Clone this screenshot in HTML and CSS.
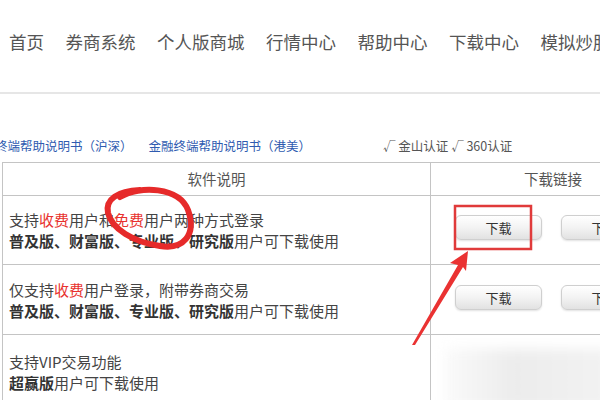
FILE: index.html
```html
<!DOCTYPE html>
<html lang="zh-CN">
<head>
  <meta charset="UTF-8" />
  <meta name="viewport" content="width=device-width, initial-scale=1.0"/>
  <title>下载中心</title>
  <link rel="stylesheet" href="styles.css">
</head>
<body>

  <div class="nav">
    <a href="#">首页</a>
    <a href="#">券商系统</a>
    <a href="#">个人版商城</a>
    <a href="#">行情中心</a>
    <a href="#">帮助中心</a>
    <a href="#">下载中心</a>
    <a href="#">模拟炒股</a>
  </div>

  <div class="links">
    <a href="#">金融终端帮助说明书（沪深）</a>
    <a href="#">金融终端帮助说明书（港美）</a>
    <span class="cert">√ 金山认证 √ 360认证</span>
  </div>

  <table class="soft">
    <tr>
      <th class="desc">软件说明</th>
      <th class="dl">下载链接</th>
    </tr>
    <tr class="r1">
      <td class="desc">
        支持<span class="red">收费</span>用户和<span class="red">免费</span>用户两种方式登录<br>
        <b>普及版、财富版、专业版、研究版</b>用户可下载使用
      </td>
      <td class="dl">
        <div class="btns"><button>下载</button><button>下载</button></div>
      </td>
    </tr>
    <tr class="r2">
      <td class="desc">
        仅支持<span class="red">收费</span>用户登录，附带券商交易<br>
        <b>普及版、财富版、专业版、研究版</b>用户可下载使用
      </td>
      <td class="dl">
        <div class="btns"><button>下载</button><button>下载</button></div>
      </td>
    </tr>
    <tr class="r3">
      <td class="desc">
        支持VIP交易功能<br>
        <b>超赢版</b>用户可下载使用
      </td>
      <td class="dl">
        <div class="blur"></div>
      </td>
    </tr>
  </table>

  <!-- 标注：圈、框、箭头 -->
  <svg class="marks" width="600" height="400" viewBox="0 0 600 400">
    <path d="M120 197 C140 185, 179 187, 188 210 C197 235, 183 250, 160 246 C133 242, 112 229, 108 213 C105 199, 118 191, 140 190"
          fill="none" stroke="#e62a2a" stroke-width="6" stroke-linecap="round"/>
    <rect x="455" y="206" width="76" height="43" fill="none" stroke="#e03a3a" stroke-width="2.5"/>
    <polygon points="468,251 450,263 458,265 412,345 415,345 463,267 466,271" fill="#ea3232"/>
  </svg>

</body>
</html>
```

FILE: styles.css
```css
html, body {
  height: 400px;
}

body {
  margin: 0;
  position: relative;
  overflow: hidden;
  background: #fff;
  font-family: "Noto Sans CJK SC", "Noto Sans", sans-serif;
  color: #444;
}

.nav {
  display: flex;
  align-items: center;
  gap: 21.5px;
  height: 83px;
  padding: 0 0 9px 9px;
  border-bottom: 2px solid #e6e6e6;
  white-space: nowrap;
}

.nav a {
  font-size: 17.5px;
  color: #555;
  text-decoration: none;
}

.links {
  display: flex;
  align-items: flex-end;
  height: 60px;
  padding-bottom: 8px;
  margin-left: -30px;
  font-size: 12.5px;
  line-height: 17px;
  white-space: nowrap;
}

.links a {
  color: #2f5bb0;
  text-decoration: none;
  margin-right: 16px;
}

.links .cert {
  margin-left: 56px;
  color: #555;
}

table.soft {
  margin-left: 2px;
  width: 674px;
  border-collapse: collapse;
  table-layout: fixed;
  font-size: 15px;
}

.soft th,
.soft td {
  border: 1px solid #c4c4c4;
  padding: 0;
}

.soft th {
  height: 32px;
  font-weight: normal;
  font-size: 14.5px;
  line-height: 20px;
  color: #555;
}

.soft th.desc {
  width: 427px;
}

.soft td.desc {
  padding-left: 6px;
  line-height: 21px;
  color: #444;
}

.soft td.desc b {
  color: #333;
}

.red {
  color: #e8322e;
}

.r1 td {
  height: 68px;
}

.r2 td {
  height: 69px;
}

.r3 td {
  height: 74px;
}

.soft td.dl {
  padding-left: 24px;
}

.btns {
  display: flex;
  gap: 19px;
  margin-bottom: 5px;
}

.btns button {
  width: 87px;
  height: 25px;
  padding: 0;
  border: 1px solid #cfcfcf;
  border-radius: 6px;
  background: linear-gradient(#ffffff, #f3f3f3 50%, #e2e2e2);
  box-shadow: 0 1px 2px rgba(0,0,0,0.12);
  font-family: inherit;
  font-size: 13px;
  line-height: 23px;
  color: #333;
}

.blur {
  height: 60px;
  margin: 14px 0 0 -10px;
  background: linear-gradient(90deg, #fafafa, #ececec 30%, #f2f2f2 70%, #fafafa);
  filter: blur(6px);
}

.marks {
  position: absolute;
  left: 0;
  top: 0;
  pointer-events: none;
}
```
